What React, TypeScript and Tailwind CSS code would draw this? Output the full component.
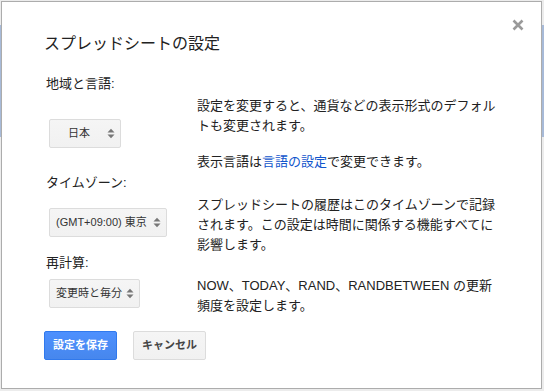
import React from "react";

const font = { fontFamily: '"Liberation Sans", Arial, "Noto Sans CJK JP", sans-serif' };

function Arrows() {
  return (
    <svg width="8" height="11" viewBox="0 0 8 11" className="shrink-0">
      <path d="M0.5 4.5 L4 0.8 L7.5 4.5 Z" fill="#777" />
      <path d="M0.5 6.5 L4 10.2 L7.5 6.5 Z" fill="#777" />
    </svg>
  );
}

function Select({ label, w, pl }: { label: string; w: string; pl: string }) {
  return (
    <div
      className={`${w} ${pl} h-[29px] ml-[5px] pr-[5px] flex items-center justify-between rounded-[2px] border border-[#dcdcdc] bg-[linear-gradient(#f5f5f5,#f1f1f1)] text-[11px] text-[#333]`}
    >
      <span className="whitespace-nowrap">{label}</span>
      <Arrows />
    </div>
  );
}

export default function App() {
  return (
    <div className="relative w-[544px] h-[391px] bg-[#ececec] overflow-hidden" style={font}>
      <div className="absolute left-0 right-0 top-[25px] h-[112px] bg-[#a7bad8]" />
      <div className="relative ml-[1px] mt-[1px] w-[541px] h-[388px] bg-white border border-[#acacac] text-[#222]">
        <svg
          width="12"
          height="12"
          viewBox="0 0 12 12"
          className="absolute right-[17px] top-[17px]"
        >
          <path d="M1.5 1.5 L10.5 10.5 M10.5 1.5 L1.5 10.5" stroke="#9a9a9a" strokeWidth="2.6" />
        </svg>
        <div className="pl-[42px] pt-[32px]">
          <div className="text-[16px] leading-[20px] text-[#222]">スプレッドシートの設定</div>
          <div className="flex mt-[22px]">
            <div className="w-[153px] flex flex-col items-start text-[13px]">
              <div className="ml-[2px] leading-[16px]">地域と言語:</div>
              <div className="mt-[27px]">
                <Select label="日本" w="w-[72px]" pl="pl-[18px]" />
              </div>
              <div className="ml-[2px] mt-[27px] leading-[16px]">タイムゾーン:</div>
              <div className="mt-[17px]">
                <Select label="(GMT+09:00) 東京" w="w-[118px]" pl="pl-[6px]" />
              </div>
              <div className="ml-[2px] mt-[18px] leading-[16px]">再計算:</div>
              <div className="mt-[8px]">
                <Select label="変更時と毎分" w="w-[91px]" pl="pl-[6px]" />
              </div>
              <div className="flex gap-[16px] mt-[23px]">
                <button className="w-[73px] h-[29px] rounded-[2px] border border-[#3079ed] bg-[linear-gradient(#4d90fe,#4787ed)] text-white text-[11px] font-bold">
                  設定を保存
                </button>
                <button className="w-[73px] h-[29px] rounded-[2px] border border-[#dcdcdc] bg-[linear-gradient(#f5f5f5,#f1f1f1)] text-[#444] text-[11px] font-bold">
                  キャンセル
                </button>
              </div>
            </div>
            <div className="w-[300px] text-[13px] leading-[20px] text-[#222]">
              <p className="mt-[20px]">
                設定を変更すると、通貨などの表示形式のデフォルトも変更されます。
              </p>
              <p className="mt-[16px]">
                表示言語は<span className="text-[#15c]">言語の設定</span>で変更できます。
              </p>
              <p className="mt-[23px]">
                スプレッドシートの履歴はこのタイムゾーンで記録されます。この設定は時間に関係する機能すべてに影響します。
              </p>
              <p className="mt-[21px]">NOW、TODAY、RAND、RANDBETWEEN の更新頻度を設定します。</p>
            </div>
          </div>
        </div>
      </div>
    </div>
  );
}
